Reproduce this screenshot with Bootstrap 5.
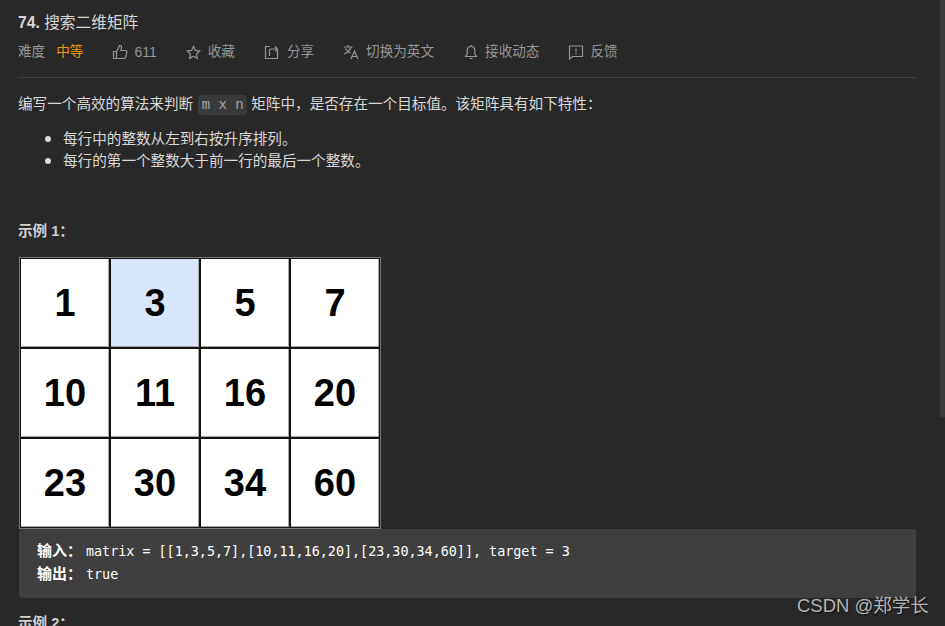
<!DOCTYPE html>
<html lang="zh"><head><meta charset="utf-8">
<title>74. 搜索二维矩阵</title>
<link href="https://cdn.jsdelivr.net/npm/bootstrap@5.3.0/dist/css/bootstrap.min.css" rel="stylesheet">
<style>
html,body{height:626px;overflow:hidden;background:#282828}
body{font-family:"Liberation Sans","Noto Sans CJK SC",sans-serif;color:#d9d9d9;font-size:14.6px;position:relative}
.pg{padding:14px 29px 0 18px}
.ttl{font-size:15.7px;line-height:18px;font-weight:400;color:#d6d6d6;margin:0}
.ttl b{font-weight:700}
.meta{height:20px;margin-top:10px;font-size:13.6px;line-height:20px;color:#969696;gap:29px}
.meta svg{flex:none;fill:none;stroke:#969696;stroke-width:1.2;width:16px;height:16px;margin-right:6px}
.mi{display:flex;align-items:center}
.mi.lab{margin-right:-18px}
.lvl{color:#f0950e}
.num{font-size:14px}
.meta svg.sm{width:15px;height:15px;margin-right:7px}
.meta svg.wd{margin-right:7px}
.rule{height:1px;background:#3e3e3e;margin:15px 0 0;width:899px}
.desc{margin:15px 0 0;line-height:22px;height:22px}
.cd{font-family:"Liberation Mono",monospace;font-size:14px;background:#3a3a3a;color:#a8a8a8;border-radius:4px;padding:0 3.5px;margin:0 0 0 1px;display:inline-block;line-height:20px;height:20px;vertical-align:0}
.bl{margin:13px 0 0;padding-left:45px;line-height:21px;color:#d9d9d9}
.bl li::marker{font-size:19px;line-height:1}
.ex{font-weight:700;margin:49px 0 0;line-height:20px;font-size:14.6px;color:#cfcfcf}
.mtx{display:grid;grid-template-columns:repeat(4,88px);grid-auto-rows:88px;gap:2px;background:#141414;border:2px solid #141414;outline:1px solid #777;outline-offset:-1px;width:362px;height:272px;margin:16px 0 0 1px;padding:0}
.cl{background:#fff;color:#000;font-weight:700;font-size:38px;display:flex;align-items:center;justify-content:center;box-shadow:inset 0 -1px 0 #aaa,inset -1px 0 0 #aaa}
.cl.on{background:#d7e6fa}
.out{background:#3f3f3f;border-radius:3px;margin:0 0 0 1px;width:897px;height:69px;padding:11px 18px;font-family:"DejaVu Sans Mono","Noto Sans CJK SC",monospace;font-size:13.4px;line-height:23px;color:#fff}
.out b{font-family:"Noto Sans CJK SC",sans-serif;font-size:15px;font-weight:700;line-height:1;display:inline-block;width:49px}
.ex2{margin:15px 0 0}
.wm{position:absolute;left:797px;top:594px;font-size:18.5px;line-height:24px;color:#b4b4b4;text-shadow:1px 1px 1px #111}
.sb{position:absolute;right:0;top:0;width:5px;height:417px;background:#3a3a3a}
</style></head>
<body>
<div class="pg">
<h1 class="ttl"><b>74.</b> 搜索二维矩阵</h1>
<div class="meta d-flex">
<span class="mi lab">难度</span>
<span class="mi lvl">中等</span>
<span class="mi"><svg viewBox="0 0 16 16"><path d="M1.500 7.500h3v7h-3zM4.500 7.500l3-6c1.500 0 2.200 1 2 2.200L9 6.500h4.500c1 0 1.600.8 1.400 1.700l-1.200 5c-.2.800-.7 1.300-1.500 1.300H4.500"/></svg><span class="num">611</span></span>
<span class="mi"><svg class="sm" viewBox="0 0 15 15"><path d="M7.500 1.500l1.900 3.900 4.300.6-3.100 3 .7 4.300-3.800-2-3.800 2 .7-4.300-3.100-3 4.300-.6z"/></svg>收藏</span>
<span class="mi"><svg class="wd" viewBox="0 0 16 16"><path d="M5.500 2.500H1.500v12h12V6M5.500 12V6.500c0-1 .6-1.500 1.500-1.500h6.500M11 2.500L13.500 5 11 7.500"/></svg>分享</span>
<span class="mi"><svg class="wd" viewBox="0 0 16 16"><path d="M1 3h8.500M5 1v2M8 3c-.8 3-3 5.500-7 7M2.500 4.500c1 2.300 3 3.700 5 4.500M8 15l3.500-8 3.500 8M9.200 12.500h4.600"/></svg>切换为英文</span>
<span class="mi"><svg viewBox="0 0 16 16"><path d="M2.500 12.500h11l-1.700-2.500V6.500c0-2.500-1.500-4-3.800-4s-3.800 1.500-3.800 4V10zM6.500 14.500h3M8 1v1.500"/></svg>接收动态</span>
<span class="mi"><svg viewBox="0 0 16 16"><path d="M1.500 2h13v10.500H4.500l-3 2.500zM8 4.500v4M8 9.700v1.300"/></svg>反馈</span>
</div>
<div class="rule"></div>
<p class="desc">编写一个高效的算法来判断 <code class="cd">m x n</code> 矩阵中，是否存在一个目标值。该矩阵具有如下特性：</p>
<ul class="bl">
<li>每行中的整数从左到右按升序排列。</li>
<li>每行的第一个整数大于前一行的最后一个整数。</li>
</ul>
<p class="ex">示例 1：</p>
<div class="mtx">
<div class="cl">1</div><div class="cl on">3</div><div class="cl">5</div><div class="cl">7</div>
<div class="cl">10</div><div class="cl">11</div><div class="cl">16</div><div class="cl">20</div>
<div class="cl">23</div><div class="cl">30</div><div class="cl">34</div><div class="cl">60</div>
</div>
<div class="out"><b>输入：</b>matrix = [[1,3,5,7],[10,11,16,20],[23,30,34,60]], target = 3<br><b>输出：</b>true</div>
<p class="ex ex2">示例 2：</p>
</div>
<div class="sb"></div>
<div class="wm">CSDN @郑学长</div>
</body></html>
